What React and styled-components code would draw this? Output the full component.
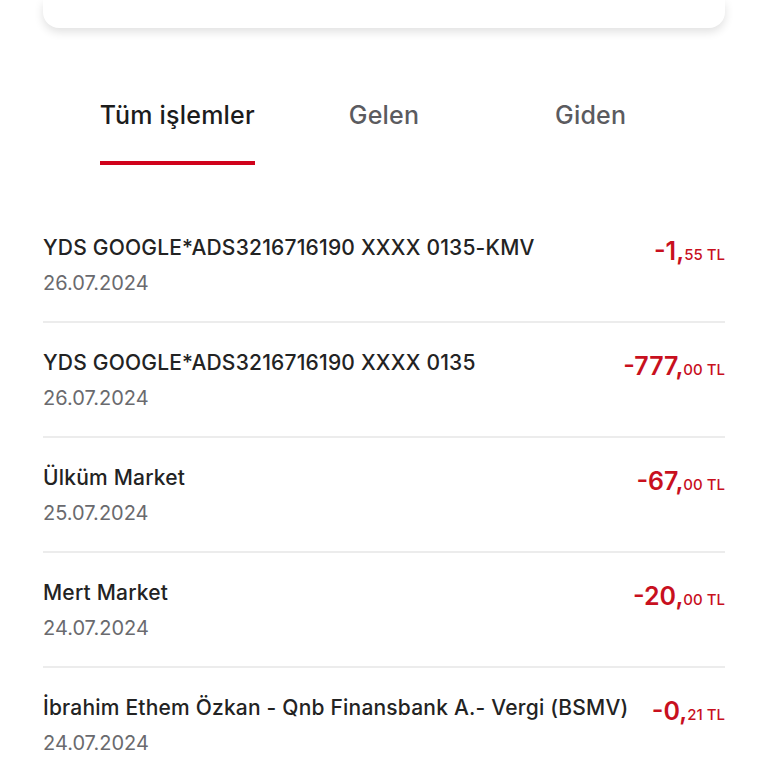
import React from "react";
import styled, { createGlobalStyle } from "styled-components";

const GlobalStyle = createGlobalStyle`
  body {
    margin: 0;
    background: #ffffff;
    font-family: Inter, "Noto Sans", sans-serif;
    color: #222222;
  }
`;

const Page = styled.div`
  width: 768px;
  overflow: hidden;
`;

const Card = styled.div`
  margin: 0 43px;
  height: 28px;
  background: #ffffff;
  border-radius: 0 0 16px 16px;
  box-shadow: 0 4px 10px rgba(0, 0, 0, 0.12);
`;

const Tabs = styled.div`
  display: grid;
  grid-template-columns: repeat(3, 1fr);
  width: 620px;
  margin: 72px auto 0;
`;

const Tab = styled.div`
  display: flex;
  justify-content: center;
`;

const TabLabel = styled.span`
  display: inline-block;
  padding-bottom: 31px;
  font-size: 25px;
  line-height: 30px;
  font-weight: 500;
  letter-spacing: 0.2px;
  color: ${(p) => (p.$active ? "#1c1c1c" : "#5b5b5f")};
  border-bottom: 4px solid ${(p) => (p.$active ? "#d0021b" : "transparent")};
`;

const List = styled.div`
  margin: 43px 43px 0;
`;

const Row = styled.div`
  display: flex;
  justify-content: space-between;
  align-items: flex-start;
  gap: 16px;
  padding: 28px 0 26px;
  border-bottom: 2px solid #ececec;
  &:last-child {
    border-bottom: none;
  }
`;

const Info = styled.div`
  display: flex;
  flex-direction: column;
  gap: 11px;
`;

const Title = styled.div`
  font-size: 21px;
  line-height: 24px;
  font-weight: 500;
  letter-spacing: 0.2px;
  color: #232323;
  white-space: nowrap;
`;

const DateText = styled.div`
  font-size: 20px;
  line-height: 24px;
  color: #6a6a6e;
`;

const Amount = styled.div`
  display: flex;
  align-items: baseline;
  white-space: nowrap;
  color: #c8101e;
  line-height: 30px;
`;

const Whole = styled.span`
  font-size: 25px;
  font-weight: 600;
`;

const Fraction = styled.span`
  font-size: 15px;
  font-weight: 500;
`;

const rows = [
  { title: "YDS GOOGLE*ADS3216716190 XXXX 0135-KMV", date: "26.07.2024", whole: "-1,", frac: "55 TL" },
  { title: "YDS GOOGLE*ADS3216716190 XXXX 0135", date: "26.07.2024", whole: "-777,", frac: "00 TL" },
  { title: "Ülküm Market", date: "25.07.2024", whole: "-67,", frac: "00 TL" },
  { title: "Mert Market", date: "24.07.2024", whole: "-20,", frac: "00 TL" },
  {
    title: "İbrahim Ethem Özkan - Qnb Finansbank A.- Vergi (BSMV)",
    date: "24.07.2024",
    whole: "-0,",
    frac: "21 TL",
  },
];

const App = () => {
  return (
    <Page>
      <GlobalStyle />
      <Card />
      <Tabs>
        <Tab>
          <TabLabel $active>Tüm işlemler</TabLabel>
        </Tab>
        <Tab>
          <TabLabel>Gelen</TabLabel>
        </Tab>
        <Tab>
          <TabLabel>Giden</TabLabel>
        </Tab>
      </Tabs>
      <List>
        {rows.map((r, i) => (
          <Row key={i}>
            <Info>
              <Title>{r.title}</Title>
              <DateText>{r.date}</DateText>
            </Info>
            <Amount>
              <Whole>{r.whole}</Whole>
              <Fraction>{r.frac}</Fraction>
            </Amount>
          </Row>
        ))}
      </List>
    </Page>
  );
};

export default App;
